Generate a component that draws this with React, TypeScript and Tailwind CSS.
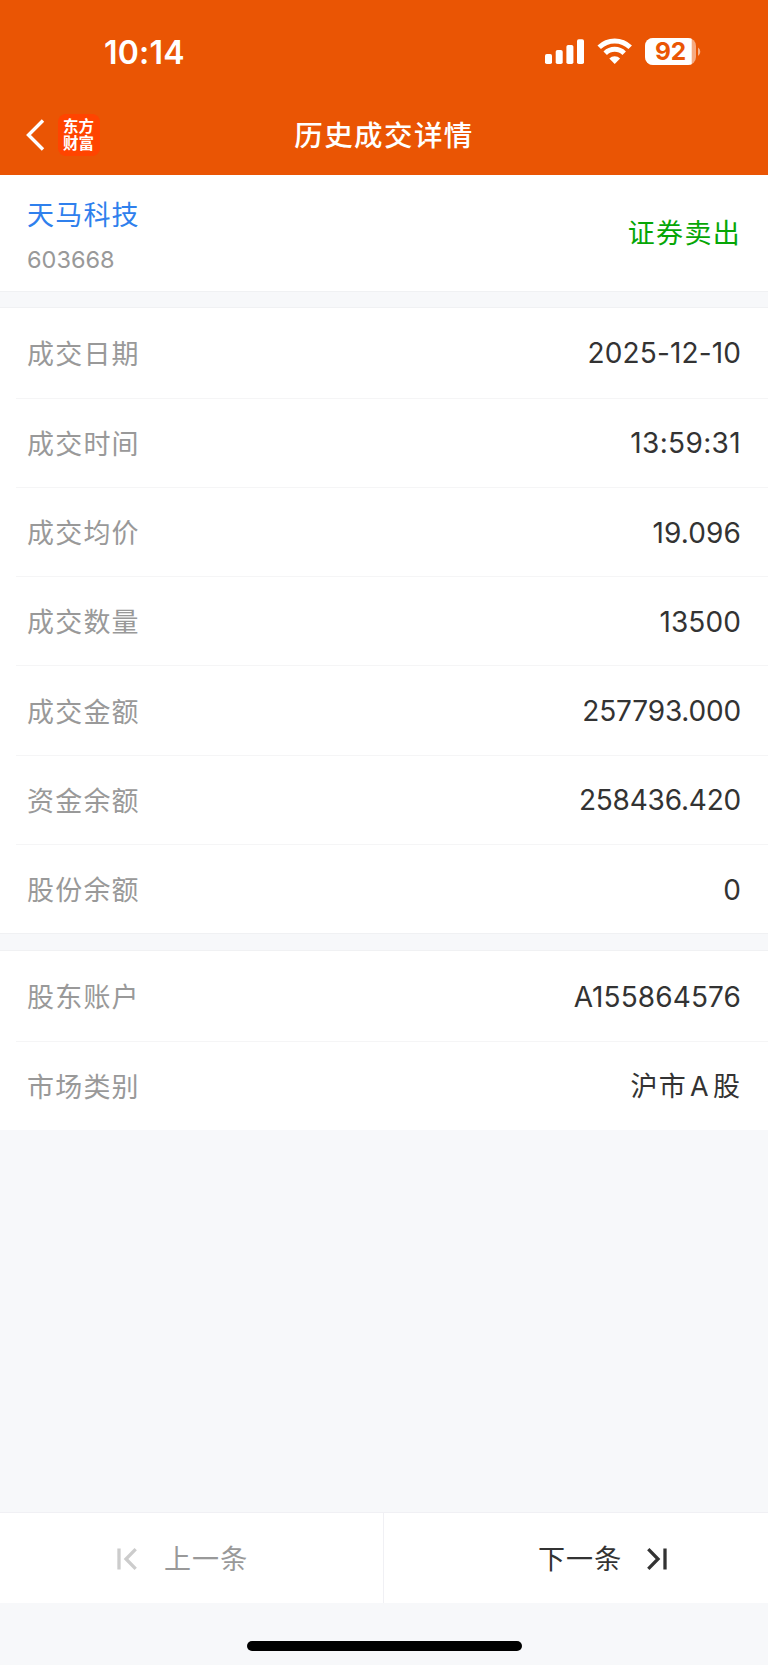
type Row = { label: string; value: string; tracking: string };

const tradeRows: Row[] = [
  { label: '成交日期', value: '2025-12-10', tracking: 'text-[28px] tracking-[0.13px]' },
  { label: '成交时间', value: '13:59:31', tracking: 'text-[28px] tracking-[0.35px]' },
  { label: '成交均价', value: '19.096', tracking: 'text-[28px] tracking-[0.1px]' },
  { label: '成交数量', value: '13500', tracking: 'text-[28px] tracking-[0.1px]' },
  { label: '成交金额', value: '257793.000', tracking: 'text-[28px] tracking-[-0.18px]' },
  { label: '资金余额', value: '258436.420', tracking: 'text-[28px] tracking-[-0.2px]' },
  { label: '股份余额', value: '0', tracking: 'text-[28px] tracking-[0px]' },
];

const accountRows: Row[] = [
  { label: '股东账户', value: 'A155864576', tracking: 'text-[28px] tracking-[0.1px]' },
  { label: '市场类别', value: '沪市 A 股', tracking: 'text-[27px] tracking-[1.1px] [word-spacing:-5.5px]' },
];

function DetailRow({ row, first }: { row: Row; first: boolean }) {
  return (
    <div className="flex h-[89.3px] pl-4">
      <div
        className={
          first
            ? 'flex flex-1 items-center justify-between pt-px pr-[27px] pl-[11px]'
            : 'flex flex-1 items-center justify-between border-t border-[#f5f5f6] pt-px pr-[27px] pl-[11px]'
        }
      >
        <span className="pt-[2px] text-[27px] leading-none tracking-[1.2px] text-[#999999]">{row.label}</span>
        <span className={`leading-none text-[#333333] ${row.tracking}`}>{row.value}</span>
      </div>
    </div>
  );
}

function Section({ rows }: { rows: Row[] }) {
  return (
    <section className="bg-white">
      {rows.map((row, i) => (
        <DetailRow key={row.label} row={row} first={i === 0} />
      ))}
    </section>
  );
}

function StatusIcons() {
  return (
    <svg className="mb-[2px] h-[30px] w-[160px] fill-white" viewBox="0 0 160 30">
      <rect x="1" y="18" width="7" height="10" rx="1.8" />
      <rect x="11.7" y="14" width="7" height="14" rx="1.8" />
      <rect x="22.4" y="9" width="7" height="19" rx="1.8" />
      <rect x="33" y="3.3" width="7" height="24.7" rx="1.8" />
      <g fill="none" stroke="#fff" strokeWidth="5">
        <path d="M55.2 11.3a22.2 22.2 0 0 1 31 0" />
        <path d="M61.2 17.2a13.7 13.7 0 0 1 19 0" />
      </g>
      <path d="M65.3 22.4a7.8 7.8 0 0 1 10.8 0L70.7 28z" />
      <clipPath id="battery">
        <rect x="101" y="2" width="51" height="27" rx="8" />
      </clipPath>
      <g clipPath="url(#battery)">
        <rect x="101" y="2" width="51" height="27" fillOpacity=".5" />
        <rect x="101" y="2" width="46.7" height="27" />
      </g>
      <path d="M154 11.5a5 5 0 0 1 0 8.4z" fillOpacity=".55" />
      <text
        x="126.6"
        y="24.200"
        textAnchor="middle"
        className="fill-[#ea5504] font-['Inter'] text-[24.5px] font-bold"
      >
        92
      </text>
    </svg>
  );
}

export default function App() {
  return (
    <div className="flex h-[1665px] w-[768px] flex-col overflow-hidden bg-[#f7f8fa] font-['Inter','Noto_Sans_CJK_SC',sans-serif]">
      <header className="flex h-[174.5px] shrink-0 flex-col bg-[#ea5504] text-white">
        <div className="flex h-[104px] items-center justify-between pr-[64px] pl-[104px]">
          <span className="pt-[2px] text-[32px] leading-none font-semibold tracking-[0.2px]">10:14</span>
          <StatusIcons />
        </div>
        <div className="grid h-[62px] grid-cols-3 items-center">
          <div className="flex items-center pl-[24.5px]">
            <svg className="h-[32px] w-[20px]" viewBox="0 0 20 32" fill="none" stroke="#fff" strokeWidth="3.4">
              <path d="M18 1.5 3.500 16 18 30.5" />
            </svg>
            <div className="ml-[13px] flex size-[42px] flex-col items-center justify-center rounded-[8px] bg-[#ff4400] text-[15.5px] leading-[17px] font-bold">
              <span>东方</span>
              <span>财富</span>
            </div>
          </div>
          <h1 className="pt-[3px] text-center text-[28.5px] leading-none font-medium tracking-[1.4px]">历史成交详情</h1>
        </div>
      </header>

      <section className="flex h-[116px] shrink-0 items-center justify-between bg-white pr-[27px] pl-[27px]">
        <div className="flex flex-col pt-[10px]">
          <span className="text-[27px] leading-[44px] tracking-[1.2px] text-[#2f80ed]">天马科技</span>
          <span className="text-[23.5px] leading-[43px] text-[#999999]">603668</span>
        </div>
        <span className="pt-px text-[27px] leading-none tracking-[1.3px] text-[#06a606]">证券卖出</span>
      </section>

      <div className="h-[17.800px] shrink-0 border-y border-[#f0f1f3]" />
      <Section rows={tradeRows} />
      <div className="h-[18px] shrink-0 border-y border-[#f0f1f3]" />
      <Section rows={accountRows} />

      <div className="flex-1" />

      <nav className="flex h-[91px] shrink-0 border-t border-[#f0f0f4] bg-white">
        <div className="flex w-[384px] items-center border-r border-[#f0f0f4] pt-px pl-[117px]">
          <svg className="h-[22px] w-[20px]" viewBox="0 0 20 22" fill="none" stroke="#cccccc" strokeWidth="3.3">
            <path d="M2 .5v21M18.7 1.2 9 11l9.700 9.800" />
          </svg>
          <span className="ml-[27px] pt-px text-[27px] leading-none tracking-[1.1px] text-[#999999]">上一条</span>
        </div>
        <div className="flex w-[384px] items-center pt-px pl-[154px]">
          <span className="pt-px text-[27px] leading-none tracking-[1.1px] text-[#333333]">下一条</span>
          <svg className="ml-[25px] h-[22px] w-[20px]" viewBox="0 0 20 22" fill="none" stroke="#333333" strokeWidth="3.3">
            <path d="M18 .5v21M1.300 1.200 11 11l-9.700 9.800" />
          </svg>
        </div>
      </nav>
      <div className="flex h-[62px] shrink-0 justify-center pt-[38px]">
        <div className="h-[9.5px] w-[275px] rounded-full bg-black" />
      </div>
    </div>
  );
}
